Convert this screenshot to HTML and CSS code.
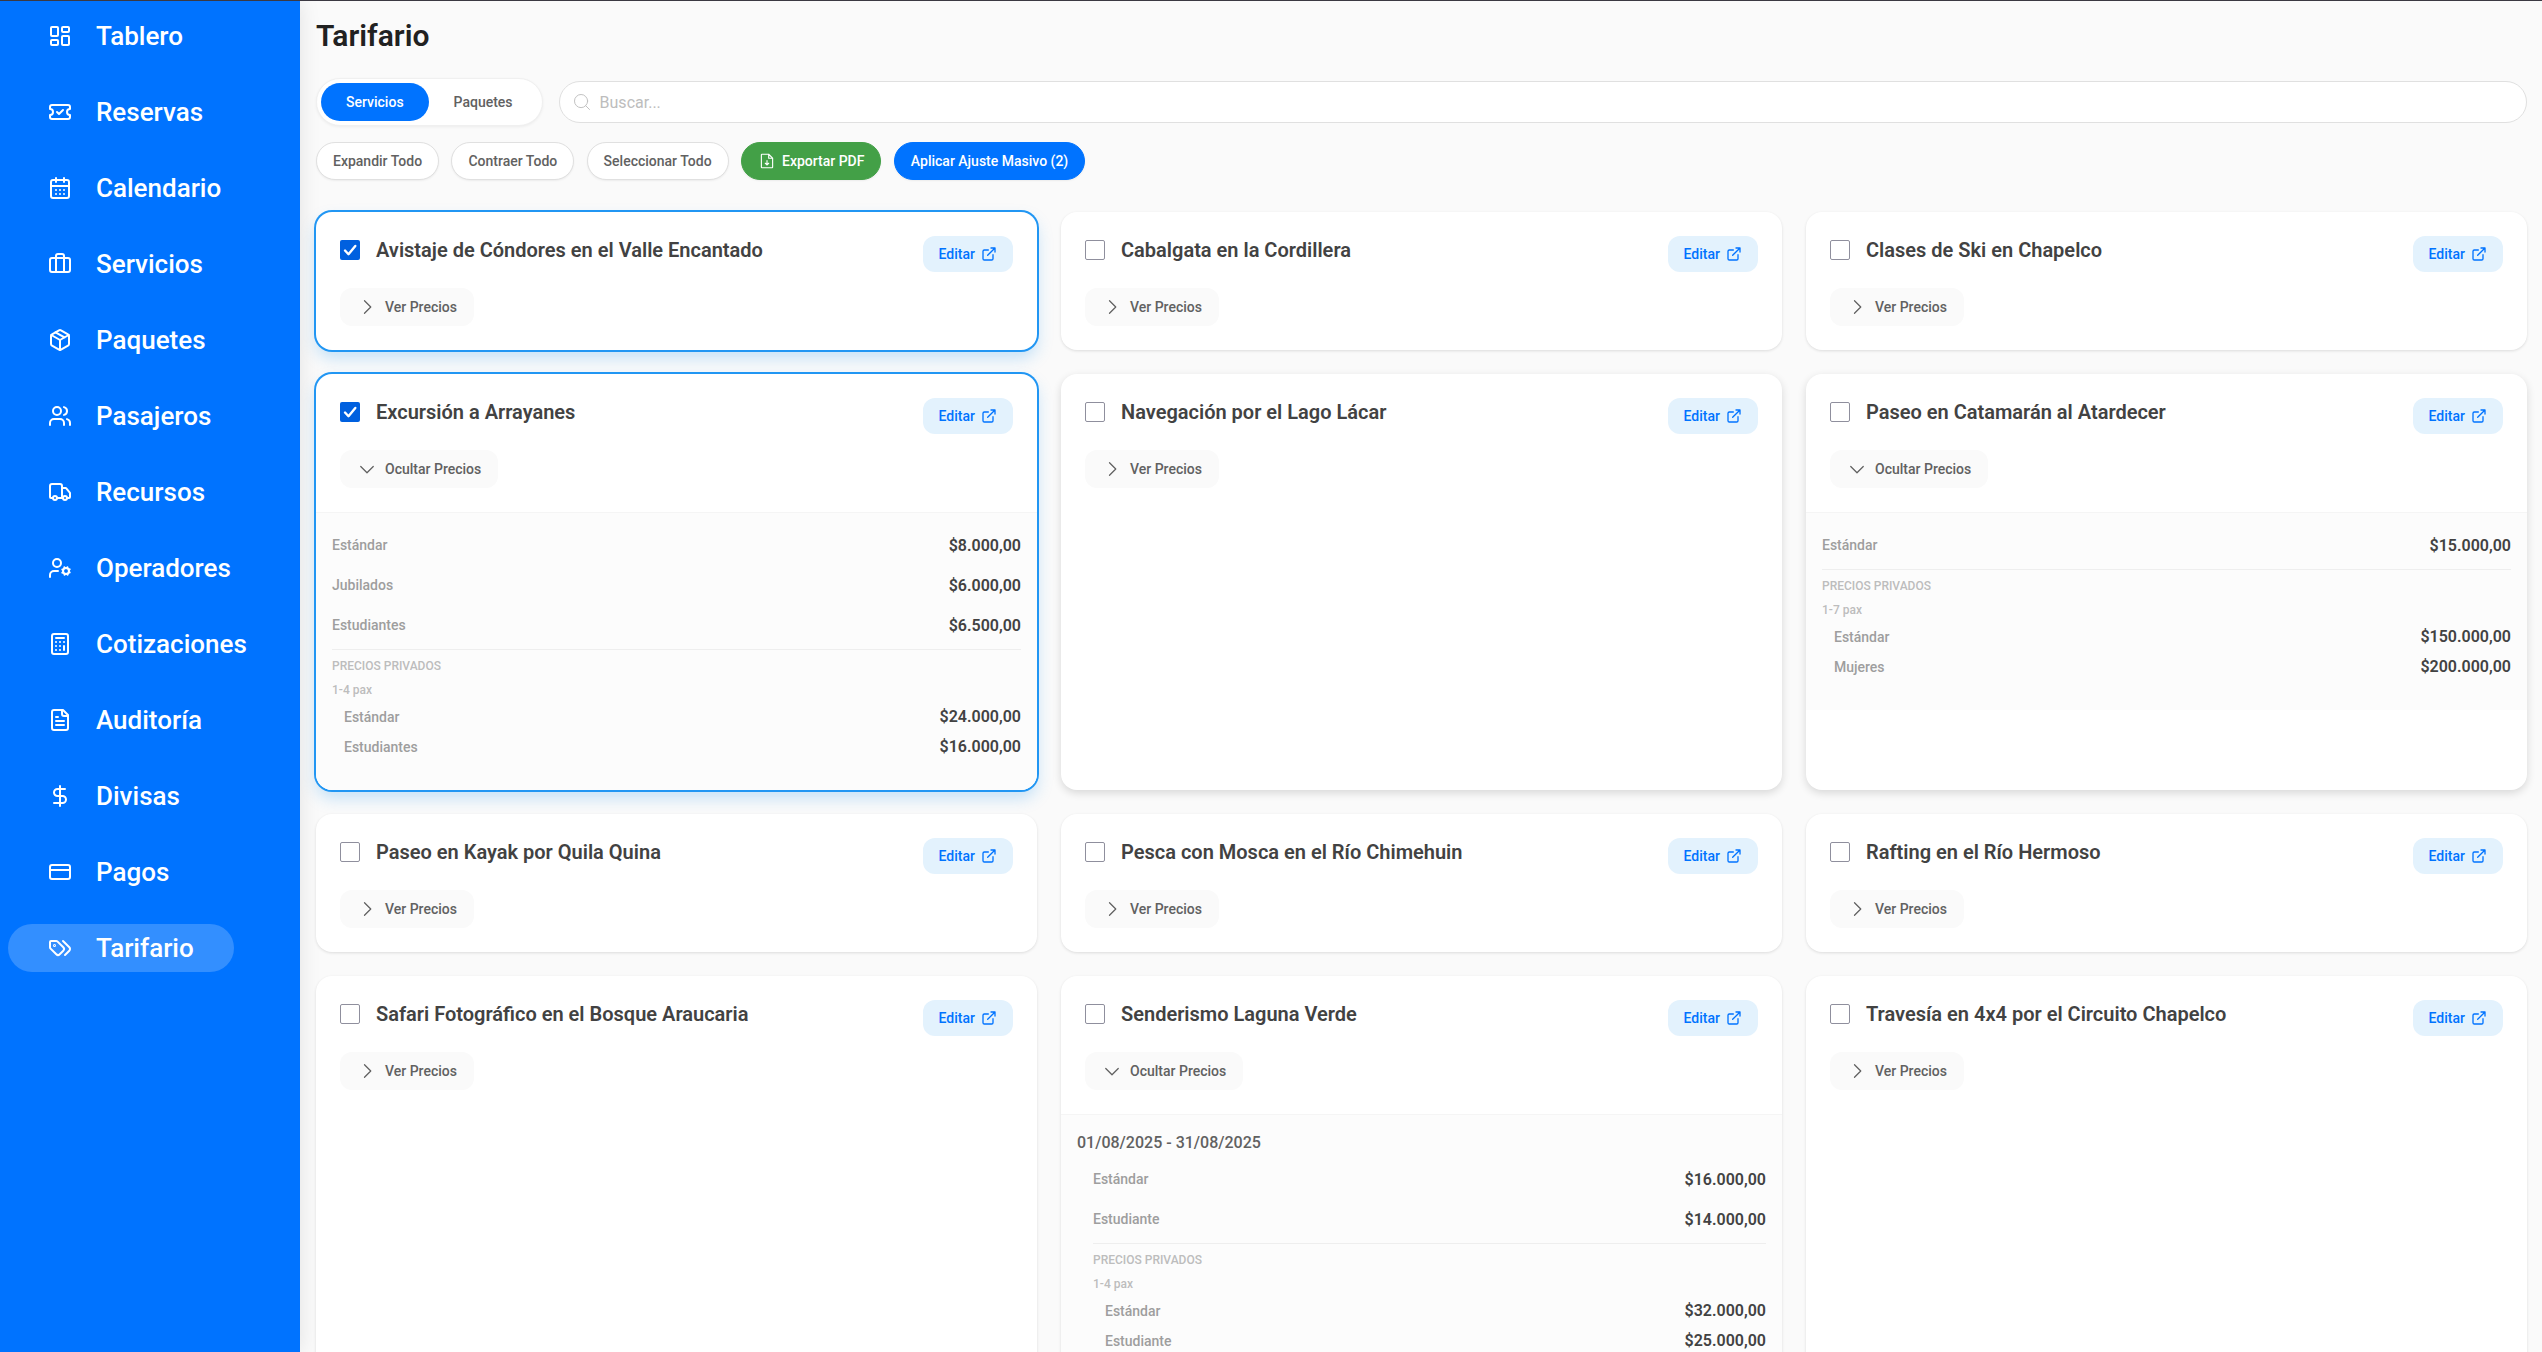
FILE: index.html
```html
<!DOCTYPE html>
<html lang="es">
<head>
    <meta charset="UTF-8">
    <meta name="viewport" content="width=device-width, initial-scale=1.0">
    <title>Tarifario</title>
    <link rel="stylesheet" href="styles.css">
</head>
<body>
    <svg class="sprite">
        <symbol id="tablero" viewBox="0 0 24 24"><rect x="3" y="3" width="7" height="9" rx="1"/><rect x="14" y="3" width="7" height="5" rx="1"/><rect x="14" y="12" width="7" height="9" rx="1"/><rect x="3" y="16" width="7" height="5" rx="1"/></symbol>
        <symbol id="reservas" viewBox="0 0 24 24"><path d="M2 9a3 3 0 0 1 0 6v2a2 2 0 0 0 2 2h16a2 2 0 0 0 2-2v-2a3 3 0 0 1 0-6V7a2 2 0 0 0-2-2H4a2 2 0 0 0-2 2Z"/><path d="m9 12 2 2 4-4"/></symbol>
        <symbol id="calendario" viewBox="0 0 24 24"><path d="M8 2v4M16 2v4M3 10h18"/><rect x="3" y="4" width="18" height="18" rx="2"/><path d="M8 14h.01M12 14h.01M16 14h.01M8 18h.01M12 18h.01M16 18h.01"/></symbol>
        <symbol id="servicios" viewBox="0 0 24 24"><path d="M16 20V4a2 2 0 0 0-2-2h-4a2 2 0 0 0-2 2v16"/><rect x="2" y="6" width="20" height="14" rx="2"/></symbol>
        <symbol id="paquetes" viewBox="0 0 24 24"><path d="M11 21.73a2 2 0 0 0 2 0l7-4A2 2 0 0 0 21 16V8a2 2 0 0 0-1-1.73l-7-4a2 2 0 0 0-2 0l-7 4A2 2 0 0 0 3 8v8a2 2 0 0 0 1 1.73z"/><path d="M12 22V12M3.29 7 12 12l8.71-5M7.5 4.27l9 5.15"/></symbol>
        <symbol id="pasajeros" viewBox="0 0 24 24"><path d="M16 21v-2a4 4 0 0 0-4-4H6a4 4 0 0 0-4 4v2"/><circle cx="9" cy="7" r="4"/><path d="M22 21v-2a4 4 0 0 0-3-3.87M16 3.13a4 4 0 0 1 0 7.75"/></symbol>
        <symbol id="recursos" viewBox="0 0 24 24"><path d="M14 18V6a2 2 0 0 0-2-2H4a2 2 0 0 0-2 2v11a1 1 0 0 0 1 1h2M15 18H9M19 18h2a1 1 0 0 0 1-1v-3.65a1 1 0 0 0-.22-.624l-3.48-4.35A1 1 0 0 0 17.52 8H14"/><circle cx="17" cy="18" r="2"/><circle cx="7" cy="18" r="2"/></symbol>
        <symbol id="operadores" viewBox="0 0 24 24"><circle cx="18" cy="15" r="3"/><circle cx="9" cy="7" r="4"/><path d="M10 15H6a4 4 0 0 0-4 4v2M21.7 16.4l-.9-.3M15.2 13.9l-.9-.3M16.6 18.7l.3-.9M19.1 12.2l.3-.9M19.6 18.7l-.4-1M16.8 12.3l-.4-1M14.3 16.6l1-.4M20.7 13.8l1-.4"/></symbol>
        <symbol id="cotizaciones" viewBox="0 0 24 24"><rect x="4" y="2" width="16" height="20" rx="2"/><path d="M8 6h8M16 14v4M16 10h.01M12 10h.01M8 10h.01M12 14h.01M8 14h.01M12 18h.01M8 18h.01"/></symbol>
        <symbol id="auditoria" viewBox="0 0 24 24"><path d="M15 2H6a2 2 0 0 0-2 2v16a2 2 0 0 0 2 2h12a2 2 0 0 0 2-2V7Z"/><path d="M14 2v4a2 2 0 0 0 2 2h4M10 9H8M16 13H8M16 17H8"/></symbol>
        <symbol id="divisas" viewBox="0 0 24 24"><path d="M12 2v20M17 5H9.5a3.5 3.5 0 0 0 0 7h5a3.5 3.5 0 0 1 0 7H6"/></symbol>
        <symbol id="pagos" viewBox="0 0 24 24"><rect x="2" y="5" width="20" height="14" rx="2"/><path d="M2 10h20"/></symbol>
        <symbol id="tarifario" viewBox="0 0 24 24"><path d="m15 5 6.3 6.3a2.4 2.4 0 0 1 0 3.4L17 19"/><path d="M9.586 5.586A2 2 0 0 0 8.172 5H3a1 1 0 0 0-1 1v5.172a2 2 0 0 0 .586 1.414L8.29 18.29a2.426 2.426 0 0 0 3.42 0l3.58-3.58a2.426 2.426 0 0 0 0-3.42z"/><circle cx="6.5" cy="9.5" r=".5"/></symbol>
        <symbol id="lupa" viewBox="0 0 256 256"><circle cx="116" cy="116" r="84"/><path d="M175.4 175.4 224 224"/></symbol>
        <symbol id="pdf" viewBox="0 0 256 256"><path d="M200 224H56a8 8 0 0 1-8-8V40a8 8 0 0 1 8-8h96l56 56v128a8 8 0 0 1-8 8ZM152 32v56h56M128 120v64M104 160l24 24 24-24"/></symbol>
        <symbol id="abrir" viewBox="0 0 24 24"><path d="M15 3h6v6M10 14 21 3M18 13v6a2 2 0 0 1-2 2H5a2 2 0 0 1-2-2V8a2 2 0 0 1 2-2h6"/></symbol>
        <symbol id="derecha" viewBox="0 0 256 256"><path d="m96 48 80 80-80 80"/></symbol>
        <symbol id="abajo" viewBox="0 0 256 256"><path d="m208 96-80 80-80-80"/></symbol>
        <symbol id="tilde" viewBox="0 0 20 20"><path d="m5 10.5 3.5 3.7L15.3 6"/></symbol>
    </svg>

    <nav class="sidebar" id="menu"></nav>

    <main>
        <h1>Tarifario</h1>
        <div class="filtros">
            <div class="tabs">
                <button class="tab activa">Servicios</button>
                <button class="tab">Paquetes</button>
            </div>
            <label class="buscador">
                <svg><use href="#lupa"/></svg>
                <input type="text" placeholder="Buscar...">
            </label>
        </div>
        <div class="acciones">
            <button class="btn">Expandir Todo</button>
            <button class="btn">Contraer Todo</button>
            <button class="btn">Seleccionar Todo</button>
            <button class="btn verde"><svg><use href="#pdf"/></svg>Exportar PDF</button>
            <button class="btn azul">Aplicar Ajuste Masivo (2)</button>
        </div>
        <section class="grilla" id="grilla"></section>
    </main>
    <script src="script.js"></script>
</body>
</html>
```

FILE: styles.css
```css
* {
    box-sizing: border-box;
}
body {
    margin: 0;
    height: 100vh;
    display: flex;
    overflow: hidden;
    border-top: 1px solid #3b3942;
    background: #fafafa;
    font-family: Roboto, sans-serif;
    font-weight: 500;
    color: #424242;
}
button {
    font: inherit;
    border: none;
    cursor: pointer;
}
svg {
    fill: none;
    stroke: currentColor;
    stroke-linecap: round;
    stroke-linejoin: round;
    flex: none;
}
.sprite {
    display: none;
}

/* menu lateral */
.sidebar {
    width: 300px;
    flex: none;
    padding: 11px 8px;
    display: flex;
    flex-direction: column;
    align-items: flex-start;
    gap: 28px;
    background: #0073ff;
    box-shadow: 0 0 20px rgba(0, 0, 0, 0.1);
}
.sidebar a {
    height: 48px;
    padding: 0 40px;
    display: flex;
    align-items: center;
    gap: 24px;
    border-radius: 24px;
    color: #fff;
    font-size: 26px;
}
.sidebar a.activo {
    background: rgba(255, 255, 255, 0.2);
}
.sidebar svg {
    width: 24px;
    height: 24px;
    stroke-width: 2;
}

/* cabecera */
main {
    flex: 1;
    min-width: 0;
    padding: 15px 15px 0 16px;
}
h1 {
    margin: 0 0 22px;
    font-size: 30px;
    line-height: 40px;
    font-weight: 600;
    color: #212121;
}
.filtros {
    display: flex;
    align-items: center;
    gap: 16px;
    margin-bottom: 16px;
}
.tabs {
    display: flex;
    padding: 4px;
    border: 1px solid #f0f0f0;
    border-radius: 24px;
    background: #fff;
    box-shadow: 0 1px 3px rgba(0, 0, 0, 0.06);
}
.tab {
    height: 38px;
    padding: 0 25px;
    border-radius: 19px;
    background: #fff;
    color: #616161;
    font-size: 14px;
}
.tab.activa {
    background: #0073ff;
    color: #fff;
}
.buscador {
    flex: 1;
    height: 42px;
    padding: 0 12px;
    display: flex;
    align-items: center;
    gap: 8px;
    border: 1px solid #e0e0e0;
    border-radius: 21px;
    background: #fff;
    color: #bdbdbd;
}
.buscador svg {
    width: 20px;
    height: 20px;
    stroke-width: 12;
}
.buscador input {
    flex: 1;
    padding: 0;
    border: none;
    outline: none;
    font: 400 16px Roboto, sans-serif;
}
.buscador input::placeholder {
    color: #bdbdbd;
}
.acciones {
    display: flex;
    gap: 12.4px;
    margin-bottom: 32px;
}
.btn {
    height: 38px;
    padding: 0 16px;
    display: flex;
    align-items: center;
    gap: 6px;
    border: 1px solid #e0e0e0;
    border-radius: 19px;
    background: #fff;
    color: #616161;
    font-size: 14px;
    box-shadow: 0 1px 2px rgba(0, 0, 0, 0.06);
}
.btn svg {
    width: 18px;
    height: 18px;
    stroke-width: 16;
}
.btn.verde {
    border-color: #43a047;
    background: #43a047;
    color: #fff;
}
.btn.azul {
    border-color: #0073ff;
    background: #0073ff;
    color: #fff;
}

/* tarjetas */
.grilla {
    display: grid;
    grid-template-columns: repeat(3, 1fr);
    gap: 24px;
}
.card {
    border-radius: 16px;
    background: #fff;
    overflow: hidden;
    box-shadow: 0 1px 3px rgba(0, 0, 0, 0.12);
}
.card.alta {
    min-height: 480px;
}
.card.elevada {
    box-shadow: 0 3px 8px rgba(0, 0, 0, 0.14);
}
.card.elegida {
    box-shadow: 0 0 0 2px #2196f3, 0 8px 16px rgba(33, 150, 243, 0.25);
}
.card-head {
    height: 138px;
    padding: 24px;
    display: flex;
    flex-direction: column;
    align-items: flex-start;
    justify-content: space-between;
}
.card-titulo {
    width: 100%;
    display: flex;
    align-items: flex-start;
    gap: 16px;
}
.check {
    width: 20px;
    height: 20px;
    margin-top: 4px;
    border: 1px solid #8f8f9d;
    border-radius: 2px;
    background: #fff;
}
.elegida .check {
    border: none;
    background: #0060df;
    color: #fff;
}
.check svg {
    display: block;
    width: 20px;
    height: 20px;
    stroke-width: 2.4;
}
h3 {
    flex: 1;
    margin: 0;
    font-size: 20px;
    line-height: 28px;
    font-weight: 600;
}
.editar {
    height: 36px;
    padding: 0 16px;
    display: flex;
    align-items: center;
    gap: 6px;
    border-radius: 12px;
    background: #e3f2fd;
    color: #0073ff;
    font-size: 14px;
}
.editar svg {
    width: 16px;
    height: 16px;
    stroke-width: 2;
}
.ver {
    height: 38px;
    padding: 0 17px;
    display: flex;
    align-items: center;
    gap: 8px;
    border-radius: 12px;
    background: #fafafa;
    color: #616161;
    font-size: 14px;
}
.ver svg {
    width: 20px;
    height: 20px;
    stroke-width: 16;
}

/* precios */
.precios {
    padding: 16px 16px 28px;
    border-top: 1px solid #f5f5f5;
    background: #fcfcfc;
}
.fecha {
    margin-bottom: 8px;
    line-height: 24px;
    font-size: 16px;
    color: #616161;
}
.bloque.sangria {
    padding-left: 16px;
}
.publicos {
    display: grid;
    gap: 8px;
}
.fila {
    height: 32px;
    display: flex;
    align-items: center;
    justify-content: space-between;
    font-size: 14px;
    color: #9e9e9e;
}
.fila b {
    font-size: 16px;
    font-weight: 600;
    color: #424242;
}
.privados {
    margin-top: 8px;
    padding-top: 8px;
    border-top: 1px solid #eee;
    font-size: 12px;
    line-height: 16px;
    color: #bdbdbd;
}
.pax {
    margin: 8px 0 4px;
}
.privados .fila {
    height: 30px;
    padding-left: 12px;
}
```

FILE: script.js
```js
const menu = ["Tablero", "Reservas", "Calendario", "Servicios", "Paquetes", "Pasajeros", "Recursos",
    "Operadores", "Cotizaciones", "Auditoría", "Divisas", "Pagos", "Tarifario"];

const servicios = [
    { nombre: "Avistaje de Cóndores en el Valle Encantado", elegida: true },
    { nombre: "Cabalgata en la Cordillera" },
    { nombre: "Clases de Ski en Chapelco" },
    {
        nombre: "Excursión a Arrayanes", elegida: true,
        precios: [["Estándar", "$8.000,00"], ["Jubilados", "$6.000,00"], ["Estudiantes", "$6.500,00"]],
        pax: "1-4 pax",
        privados: [["Estándar", "$24.000,00"], ["Estudiantes", "$16.000,00"]]
    },
    { nombre: "Navegación por el Lago Lácar", clase: "elevada" },
    {
        nombre: "Paseo en Catamarán al Atardecer", clase: "elevada",
        precios: [["Estándar", "$15.000,00"]],
        pax: "1-7 pax",
        privados: [["Estándar", "$150.000,00"], ["Mujeres", "$200.000,00"]]
    },
    { nombre: "Paseo en Kayak por Quila Quina" },
    { nombre: "Pesca con Mosca en el Río Chimehuin" },
    { nombre: "Rafting en el Río Hermoso" },
    { nombre: "Safari Fotográfico en el Bosque Araucaria" },
    {
        nombre: "Senderismo Laguna Verde", clase: "alta",
        fecha: "01/08/2025 - 31/08/2025",
        precios: [["Estándar", "$16.000,00"], ["Estudiante", "$14.000,00"]],
        pax: "1-4 pax",
        privados: [["Estándar", "$32.000,00"], ["Estudiante", "$25.000,00"]]
    },
    { nombre: "Travesía en 4x4 por el Circuito Chapelco" }
];

const icono = id => `<svg><use href="#${id}"/></svg>`;
const fila = ([tipo, precio]) => `<div class="fila"><span>${tipo}</span><b>${precio}</b></div>`;

document.getElementById("menu").innerHTML = menu.map(m => {
    const id = m.toLowerCase().replace("í", "i");
    return `<a class="${m === "Tarifario" ? "activo" : ""}">${icono(id)}${m}</a>`;
}).join("");

function detalle(s) {
    return `<div class="precios">
        ${s.fecha ? `<div class="fecha">${s.fecha}</div>` : ""}
        <div class="bloque ${s.fecha ? "sangria" : ""}">
            <div class="publicos">${s.precios.map(fila).join("")}</div>
            <div class="privados">
                <div>PRECIOS PRIVADOS</div>
                <div class="pax">${s.pax}</div>
                ${s.privados.map(fila).join("")}
            </div>
        </div>
    </div>`;
}

document.getElementById("grilla").innerHTML = servicios.map(s => `
    <article class="card ${s.elegida ? "elegida" : ""} ${s.clase || ""}">
        <div class="card-head">
            <div class="card-titulo">
                <span class="check">${s.elegida ? icono("tilde") : ""}</span>
                <h3>${s.nombre}</h3>
                <button class="editar">Editar${icono("abrir")}</button>
            </div>
            <button class="ver">${s.precios ? icono("abajo") + "Ocultar Precios" : icono("derecha") + "Ver Precios"}</button>
        </div>
        ${s.precios ? detalle(s) : ""}
    </article>`).join("");
```
